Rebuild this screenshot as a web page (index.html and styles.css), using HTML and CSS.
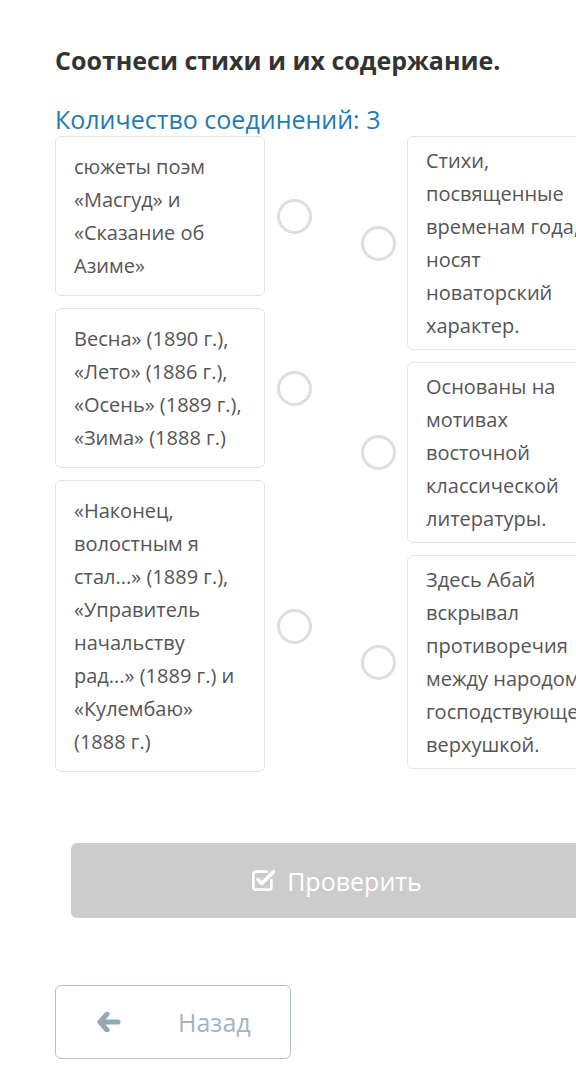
FILE: index.html
```html
<!DOCTYPE html>
<html lang="ru">
<head>
    <meta charset="UTF-8">
    <meta name="viewport" content="width=device-width, initial-scale=1.0">
    <title>Соотнеси стихи и их содержание</title>
    <link rel="stylesheet" href="styles.css">
</head>
<body>
    <div class="quiz">
        <h1 class="quiz-title">Соотнеси стихи и их содержание.</h1>
        <p class="quiz-count">Количество соединений: 3</p>

        <div class="match">
            <div class="match-col">
                <div class="match-item">
                    <div class="card card-left">сюжеты поэм «Масгуд» и «Сказание об Азиме»</div>
                    <span class="dot"></span>
                </div>
                <div class="match-item">
                    <div class="card card-left">Весна» (1890 г.), «Лето» (1886 г.), «Осень» (1889 г.), «Зима» (1888 г.)</div>
                    <span class="dot"></span>
                </div>
                <div class="match-item">
                    <div class="card card-left">«Наконец, волостным я стал...» (1889 г.), «Управитель начальству рад...» (1889 г.) и «Кулембаю» (1888 г.)</div>
                    <span class="dot"></span>
                </div>
            </div>

            <div class="match-col">
                <div class="match-item">
                    <span class="dot"></span>
                    <div class="card card-right">Стихи, посвященные временам года, носят новаторский характер.</div>
                </div>
                <div class="match-item">
                    <span class="dot"></span>
                    <div class="card card-right">Основаны на мотивах восточной классической литературы.</div>
                </div>
                <div class="match-item">
                    <span class="dot"></span>
                    <div class="card card-right">Здесь Абай вскрывал противоречия между народом и господствующей верхушкой.</div>
                </div>
            </div>
        </div>

        <button class="check-btn">
            <svg class="check-icon" viewBox="0 0 24 24" width="27" height="27">
                <path d="M19 12.5V19a2 2 0 0 1-2 2H5a2 2 0 0 1-2-2V7a2 2 0 0 1 2-2h10" fill="none" stroke="#fff" stroke-width="2.4" stroke-linecap="round"/>
                <path d="M7 12l3.5 3.5L21 5" fill="none" stroke="#fff" stroke-width="3.2" stroke-linecap="round" stroke-linejoin="round"/>
            </svg>
            Проверить
        </button>

        <button class="back-btn">
            <svg class="back-icon" viewBox="0 0 24 20" width="24" height="20">
                <path d="M10 2L3 10l7 8M4 10h17" fill="none" stroke="#94a9b8" stroke-width="5" stroke-linecap="round" stroke-linejoin="round"/>
            </svg>
            <span>Назад</span>
        </button>
    </div>
</body>
</html>
```

FILE: styles.css
```css
html, body {
    overflow-x: hidden;
}

body {
    margin: 0;
    background: #fff;
    font-family: 'Open Sans', 'Noto Sans', sans-serif;
}

.quiz {
    width: 562px;
    padding: 45px 0 30px 55px;
}

/* заголовки */
.quiz-title {
    margin: 0;
    font-size: 25px;
    line-height: 31px;
    font-weight: 700;
    color: #333;
}

.quiz-count {
    margin: 27px 0 0;
    font-size: 25px;
    line-height: 33px;
    color: #1f7bb2;
}

/* колонки соответствий */
.match {
    display: flex;
    gap: 49px;
}

.match-col {
    display: flex;
    flex-direction: column;
    gap: 12px;
}

.match-item {
    display: flex;
    align-items: center;
    gap: 12px;
}

.match-col + .match-col .match-item {
    gap: 11px;
}

.card {
    width: 210px;
    box-sizing: border-box;
    border: 1px solid #e6e6e6;
    border-radius: 6px;
    padding: 13px 18px;
    font-size: 20px;
    line-height: 33px;
    color: #555;
    background: #fff;
}

.card-right {
    padding: 7px 18px;
}

.dot {
    flex: none;
    width: 35px;
    height: 35px;
    box-sizing: border-box;
    border: 3px solid #dedede;
    border-radius: 50%;
}

/* кнопки */
.check-btn {
    display: flex;
    justify-content: center;
    align-items: center;
    gap: 10px;
    width: 530px;
    height: 75px;
    margin: 71px 16px 0;
    border: none;
    border-radius: 6px;
    background: #cccccc;
    color: #fff;
    font-family: inherit;
    font-size: 25px;
}

.check-icon {
    margin-top: -3px;
}

.back-btn {
    display: flex;
    align-items: center;
    width: 236px;
    height: 74px;
    margin-top: 67px;
    padding: 0 0 0 41px;
    box-sizing: border-box;
    border: 1px solid #b3c0c8;
    border-radius: 6px;
    background: #fff;
    color: #a3b5c1;
    font-family: inherit;
    font-size: 25px;
}

.back-icon {
    margin-right: 57px;
}
```
